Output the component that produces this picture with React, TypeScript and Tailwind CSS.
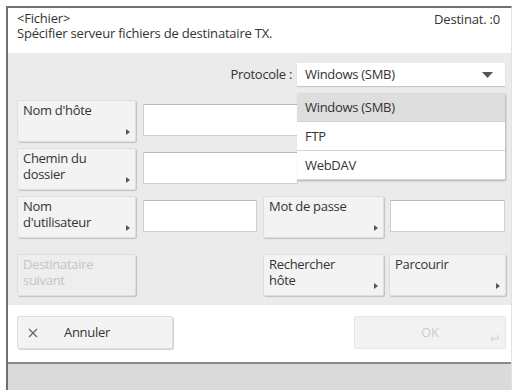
import { FC, ReactNode } from 'react';

const font = { fontFamily: '"Open Sans", "Liberation Sans", sans-serif' };

// petit triangle en bas à droite des touches
const Corner: FC = () => (
  <svg className="absolute right-[5px] bottom-[6px]" width="4" height="6" viewBox="0 0 4 6">
    <path d="M0 0 L4 3 L0 6 Z" fill="#555" />
  </svg>
);

interface KeyProps {
  children: ReactNode;
  className?: string;
  disabled?: boolean;
  arrow?: boolean;
}

const Key: FC<KeyProps> = ({ children, className = '', disabled = false, arrow = true }) => (
  <div
    className={`relative shrink-0 h-[42px] rounded-[2px] border border-[#dedede] shadow-[1px_1px_1px_rgba(0,0,0,0.18)] px-[5px] pt-[1px] text-[13px] leading-[16px] tracking-[-0.3px] ${
      disabled ? 'bg-[#eeeeee] text-[#c4c4c4]' : 'bg-[#f3f3f3] text-[#333]'
    } ${className}`}
  >
    {children}
    {arrow && !disabled && <Corner />}
  </div>
);

const Field: FC<{ className?: string }> = ({ className = '' }) => (
  <div className={`shrink-0 h-[32px] mt-[4px] bg-white border border-[#cfcfcf] border-t-[#b8b8b8] rounded-[1px] ${className}`} />
);

const App: FC = () => {
  const protocols = ['Windows (SMB)', 'FTP', 'WebDAV'];

  return (
    <div className="w-[517px] h-[390px] bg-white pt-[6px] pl-[6px]" style={font}>
      <div className="w-[506px] h-[384px] border-l-2 border-t-2 border-r border-l-[#707070] border-t-[#707070] border-r-[#e2e2e2] flex flex-col">
        {/* en-tête */}
        <div className="h-[45px] bg-white flex justify-between pl-[9px] pr-[11px] pt-[3px] text-[13px] leading-[15px] text-[#333] tracking-[-0.2px]">
          <div>
            <div>&lt;Fichier&gt;</div>
            <div>Spécifier serveur fichiers de destinataire TX.</div>
          </div>
          <div className="pt-[1px]">Destinat. :0</div>
        </div>

        {/* zone principale */}
        <div className="relative h-[252px] bg-[#ebebeb] pl-[9px] pr-[6px] pt-[10px]">
          <div className="flex justify-end items-center h-[23px]">
            <span className="text-[13px] text-[#333] mr-[5px] tracking-[-0.3px]">Protocole :</span>
            <div className="relative w-[208px] h-[23px] bg-white shadow-[0_1px_1px_rgba(0,0,0,0.15)] pl-[8px] text-[13px] leading-[23px] text-[#333] tracking-[-0.3px]">
              Windows (SMB)
              <svg className="absolute right-[12px] top-[9px]" width="11" height="6" viewBox="0 0 11 6">
                <path d="M0 0 H11 L5.5 6 Z" fill="#555" />
              </svg>
            </div>
          </div>

          <div className="flex flex-col gap-[6px] mt-[14px]">
            <div className="flex">
              <Key className="w-[119px]">Nom d&apos;hôte</Key>
              <Field className="ml-[7px] w-[155px]" />
            </div>
            <div className="flex">
              <Key className="w-[119px]">
                Chemin du
                <br />
                dossier
              </Key>
              <Field className="ml-[7px] w-[155px]" />
            </div>
            <div className="flex">
              <Key className="w-[119px]">
                Nom
                <br />
                d&apos;utilisateur
              </Key>
              <Field className="ml-[7px] w-[114px]" />
              <Key className="ml-[6px] w-[121px]">Mot de passe</Key>
              <Field className="ml-[6px] w-[115px]" />
            </div>
          </div>

          <div className="flex mt-[16px]">
            <Key className="w-[119px]" disabled>
              Destinataire
              <br />
              suivant
            </Key>
            <Key className="ml-[127px] w-[121px]">
              Rechercher
              <br />
              hôte
            </Key>
            <Key className="ml-[5px] w-[117px]">Parcourir</Key>
          </div>

          {/* liste déroulante ouverte */}
          <div className="absolute left-[289px] top-[40px] w-[208px] bg-white shadow-[1px_1px_2px_rgba(0,0,0,0.25)] text-[13px] text-[#333] tracking-[-0.3px]">
            {protocols.map((p, i) => (
              <div
                key={p}
                className={`h-[29px] leading-[28px] pl-[8px] border-b border-[#d4d4d4] ${i === 0 ? 'bg-[#dedede]' : 'bg-white'}`}
              >
                {p}
              </div>
            ))}
          </div>
        </div>

        {/* pied */}
        <div className="h-[57px] bg-white flex justify-between items-start pt-[11px] pl-[9px] pr-[5px]">
          <div className="w-[156px] h-[33px] flex items-center bg-[#f3f3f3] border border-[#dedede] shadow-[1px_1px_1px_rgba(0,0,0,0.18)] rounded-[2px] text-[13px] text-[#333] tracking-[-0.3px]">
            <svg className="ml-[10px]" width="10" height="10" viewBox="0 0 10 10">
              <path d="M1 1 L9 9 M9 1 L1 9" stroke="#666" strokeWidth="1.3" />
            </svg>
            <span className="ml-[26px]">Annuler</span>
          </div>
          <div className="relative w-[152px] h-[33px] flex items-center justify-center bg-[#f2f2f2] border border-[#e6e6e6] rounded-[2px] text-[13px] text-[#cdcdcd]">
            OK
            <svg className="absolute right-[6px] bottom-[6px]" width="10" height="7" viewBox="0 0 10 7">
              <path d="M9 0 V4 H2 M4 2 L2 4 L4 6" stroke="#cfcfcf" strokeWidth="1" fill="none" />
            </svg>
          </div>
        </div>

        <div className="flex-1 border-t-2 border-[#8a8a8a] bg-[#dadada]" />
      </div>
    </div>
  );
};

export default App;
